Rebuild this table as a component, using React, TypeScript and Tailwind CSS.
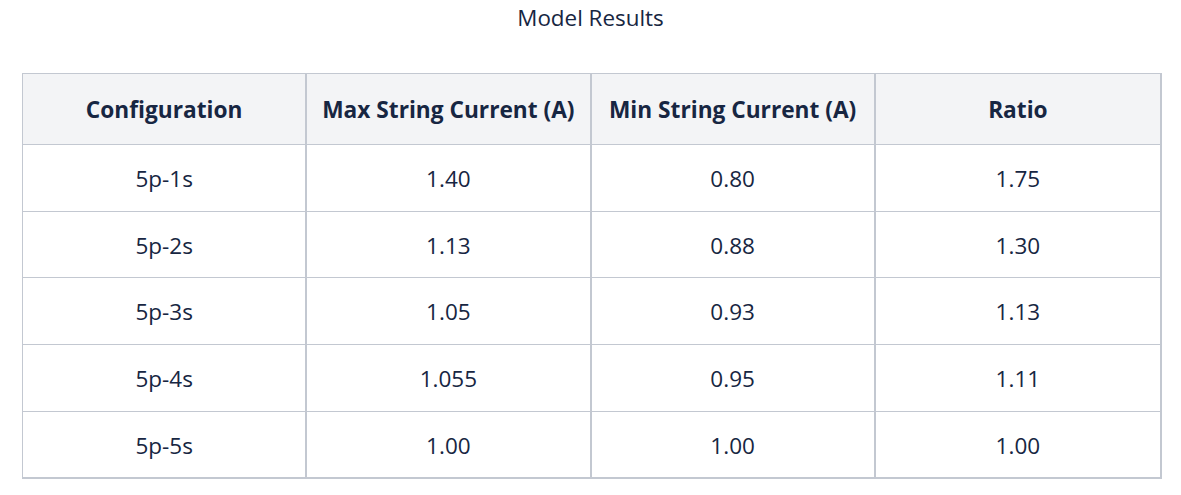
import React from "react";

const headers = ["Configuration", "Max String Current (A)", "Min String Current (A)", "Ratio"];
const rows = [
  ["5p-1s", "1.40", "0.80", "1.75"],
  ["5p-2s", "1.13", "0.88", "1.30"],
  ["5p-3s", "1.05", "0.93", "1.13"],
  ["5p-4s", "1.055", "0.95", "1.11"],
  ["5p-5s", "1.00", "1.00", "1.00"],
];
const rowH = ["h-[67px] border-b", "h-[66px] border-b", "h-[67px] border-b", "h-[67px] border-b", "h-[65px]"];

export default function App() {
  return (
    <div
      className="w-[1181px] h-[495px] bg-white text-[#172642]"
      style={{ fontFamily: '"Open Sans", "Noto Sans", sans-serif' }}
    >
      <div className="h-[37px] flex items-center justify-center text-[22.4px] pb-[2px]">Model Results</div>
      <div className="ml-[22px] mt-[36px] w-[1140px] border-l border-t border-r-2 border-b-2 border-[#c3c8d1]">
        <div className="grid grid-cols-4 h-[71px] bg-[#f3f4f6] border-b border-[#c3c8d1]">
          {headers.map((h, i) => (
            <div
              key={h}
              className={`flex items-center justify-center pt-[2px] font-bold text-[22.7px] ${i < 3 ? "border-r-2 border-[#c3c8d1]" : ""}`}
            >
              {h}
            </div>
          ))}
        </div>
        {rows.map((r, ri) => (
          <div key={ri} className={`grid grid-cols-4 border-[#c3c8d1] ${rowH[ri]}`}>
            {r.map((c, i) => (
              <div
                key={i}
                className={`flex items-center justify-center pt-[2px] text-[22.5px] ${i < 3 ? "border-r-2 border-[#c3c8d1]" : ""}`}
              >
                {c}
              </div>
            ))}
          </div>
        ))}
      </div>
    </div>
  );
}
